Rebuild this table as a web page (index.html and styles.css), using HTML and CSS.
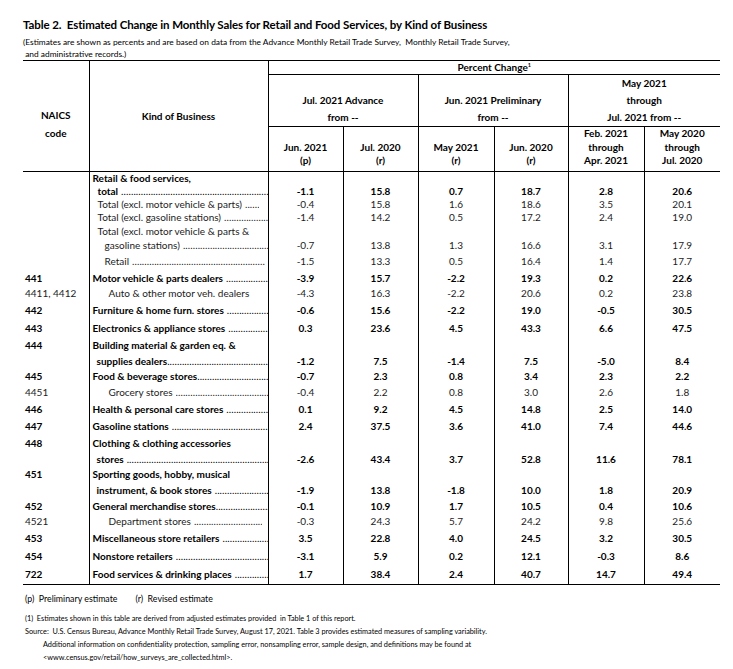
FILE: index.html
```html
<!DOCTYPE html>
<html lang="en">
<head>
<meta charset="utf-8">
<title>Table 2</title>
<link rel="stylesheet" href="styles.css">
</head>
<body>
<div class="page">
  <h1 class="title">Table 2.&nbsp; Estimated Change in Monthly Sales for Retail and Food Services, by Kind of Business</h1>
  <p class="sub">(Estimates are shown as percents and are based on data from the Advance Monthly Retail Trade Survey,&nbsp; Monthly Retail Trade Survey,<br>&nbsp;and administrative records.)</p>
  <table class="t">
    <colgroup>
      <col class="c-code"><col class="c-kind"><col class="c-n"><col class="c-n"><col class="c-n2"><col class="c-n3"><col class="c-n2"><col class="c-n2">
    </colgroup>
    <thead>
      <tr class="hr1">
        <th rowspan="3" class="first naics">NAICS<br>code</th>
        <th rowspan="3" class="kindh">Kind of Business</th>
        <th colspan="6" class="pc">Percent Change<sup>1</sup></th>
      </tr>
      <tr class="hr2">
        <th colspan="2" class="two">Jul. 2021 Advance<br>from --</th>
        <th colspan="2" class="two">Jun. 2021 Preliminary<br>from --</th>
        <th colspan="2">May 2021<br>through<br>Jul. 2021 from --</th>
      </tr>
      <tr class="hr3">
        <th>Jun. 2021<br>(p)</th>
        <th>Jul. 2020<br>(r)</th>
        <th>May 2021<br>(r)</th>
        <th>Jun. 2020<br>(r)</th>
        <th>Feb. 2021<br>through<br>Apr. 2021</th>
        <th>May 2020<br>through<br>Jul. 2020</th>
      </tr>
    </thead>
    <tbody>
      <tr class="b h14"><td class="first code"></td><td class="kc"><div class="lead">Retail &amp; food services,</div></td><td></td><td></td><td></td><td></td><td></td><td></td></tr>
      <tr class="b h12"><td class="first code"></td><td class="kc"><div class="lead i1"><span>total</span><span class="dots"></span></div></td><td>-1.1</td><td>15.8</td><td>0.7</td><td>18.7</td><td>2.8</td><td>20.6</td></tr>
      <tr class="n h13"><td class="first code"></td><td class="kc"><div class="lead i1 e9"><span>Total (excl. motor vehicle &amp; parts)</span><span class="dots"></span></div></td><td>-0.4</td><td>15.8</td><td>1.6</td><td>18.6</td><td>3.5</td><td>20.1</td></tr>
      <tr class="n h14"><td class="first code"></td><td class="kc"><div class="lead i1"><span>Total (excl. gasoline stations)</span><span class="dots"></span></div></td><td>-1.4</td><td>14.2</td><td>0.5</td><td>17.2</td><td>2.4</td><td>19.0</td></tr>
      <tr class="n h13"><td class="first code"></td><td class="kc"><div class="lead i1">Total (excl. motor vehicle &amp; parts &amp;</div></td><td></td><td></td><td></td><td></td><td></td><td></td></tr>
      <tr class="n h15"><td class="first code"></td><td class="kc"><div class="lead i2"><span>gasoline stations)</span><span class="dots"></span></div></td><td>-0.7</td><td>13.8</td><td>1.3</td><td>16.6</td><td>3.1</td><td>17.9</td></tr>
      <tr class="n h18"><td class="first code"></td><td class="kc"><div class="lead i2 e3"><span>Retail</span><span class="dots"></span></div></td><td>-1.5</td><td>13.3</td><td>0.5</td><td>16.4</td><td>1.4</td><td>17.7</td></tr>
      <tr class="b h15"><td class="first code">441</td><td class="kc"><div class="lead"><span>Motor vehicle &amp; parts dealers</span><span class="dots"></span></div></td><td>-3.9</td><td>15.7</td><td>-2.2</td><td>19.3</td><td>0.2</td><td>22.6</td></tr>
      <tr class="n h16"><td class="first code">4411, 4412</td><td class="kc"><div class="lead i3 e18"><span>Auto &amp; other motor veh. dealers</span><span class="dots"></span></div></td><td>-4.3</td><td>16.3</td><td>-2.2</td><td>20.6</td><td>0.2</td><td>23.8</td></tr>
      <tr class="b h18"><td class="first code">442</td><td class="kc"><div class="lead"><span>Furniture &amp; home furn. stores</span><span class="dots"></span></div></td><td>-0.6</td><td>15.6</td><td>-2.2</td><td>19.0</td><td>-0.5</td><td>30.5</td></tr>
      <tr class="b h18"><td class="first code">443</td><td class="kc"><div class="lead"><span>Electronics &amp; appliance stores</span><span class="dots"></span></div></td><td>0.3</td><td>23.6</td><td>4.5</td><td>43.3</td><td>6.6</td><td>47.5</td></tr>
      <tr class="b h16"><td class="first code">444</td><td class="kc"><div class="lead">Building material &amp; garden eq. &amp;</div></td><td></td><td></td><td></td><td></td><td></td><td></td></tr>
      <tr class="b h15"><td class="first code"></td><td class="kc"><div class="lead ic"><span>supplies dealers</span><span class="dots tight"></span></div></td><td>-1.2</td><td>7.5</td><td>-1.4</td><td>7.5</td><td>-5.0</td><td>8.4</td></tr>
      <tr class="b h16"><td class="first code">445</td><td class="kc"><div class="lead"><span>Food &amp; beverage stores</span><span class="dots tight"></span></div></td><td>-0.7</td><td>2.3</td><td>0.8</td><td>3.4</td><td>2.3</td><td>2.2</td></tr>
      <tr class="n h16"><td class="first code">4451</td><td class="kc"><div class="lead i3"><span>Grocery stores</span><span class="dots"></span></div></td><td>-0.4</td><td>2.2</td><td>0.8</td><td>3.0</td><td>2.6</td><td>1.8</td></tr>
      <tr class="b h17"><td class="first code">446</td><td class="kc"><div class="lead"><span>Health &amp; personal care stores</span><span class="dots"></span></div></td><td>0.1</td><td>9.2</td><td>4.5</td><td>14.8</td><td>2.5</td><td>14.0</td></tr>
      <tr class="b h18"><td class="first code">447</td><td class="kc"><div class="lead"><span>Gasoline stations</span><span class="dots"></span></div></td><td>2.4</td><td>37.5</td><td>3.6</td><td>41.0</td><td>7.4</td><td>44.6</td></tr>
      <tr class="b h16"><td class="first code">448</td><td class="kc"><div class="lead">Clothing &amp; clothing accessories</div></td><td></td><td></td><td></td><td></td><td></td><td></td></tr>
      <tr class="b h15"><td class="first code"></td><td class="kc"><div class="lead ic"><span>stores</span><span class="dots"></span></div></td><td>-2.6</td><td>43.4</td><td>3.7</td><td>52.8</td><td>11.6</td><td>78.1</td></tr>
      <tr class="b h16"><td class="first code">451</td><td class="kc"><div class="lead">Sporting goods, hobby, musical</div></td><td></td><td></td><td></td><td></td><td></td><td></td></tr>
      <tr class="b h16"><td class="first code"></td><td class="kc"><div class="lead ic"><span>instrument, &amp; book stores</span><span class="dots"></span></div></td><td>-1.9</td><td>13.8</td><td>-1.8</td><td>10.0</td><td>1.8</td><td>20.9</td></tr>
      <tr class="b h15"><td class="first code">452</td><td class="kc"><div class="lead"><span>General merchandise stores</span><span class="dots tight"></span></div></td><td>-0.1</td><td>10.9</td><td>1.7</td><td>10.5</td><td>0.4</td><td>10.6</td></tr>
      <tr class="n h16"><td class="first code">4521</td><td class="kc"><div class="lead i3 e6"><span>Department stores</span><span class="dots"></span></div></td><td>-0.3</td><td>24.3</td><td>5.7</td><td>24.2</td><td>9.8</td><td>25.6</td></tr>
      <tr class="b h18"><td class="first code">453</td><td class="kc"><div class="lead"><span>Miscellaneous store retailers</span><span class="dots"></span></div></td><td>3.5</td><td>22.8</td><td>4.0</td><td>24.5</td><td>3.2</td><td>30.5</td></tr>
      <tr class="b h18"><td class="first code">454</td><td class="kc"><div class="lead"><span>Nonstore retailers</span><span class="dots"></span></div></td><td>-3.1</td><td>5.9</td><td>0.2</td><td>12.1</td><td>-0.3</td><td>8.6</td></tr>
      <tr class="b h19"><td class="first code">722</td><td class="kc"><div class="lead"><span>Food services &amp; drinking places</span><span class="dots"></span></div></td><td>1.7</td><td>38.4</td><td>2.4</td><td>40.7</td><td>14.7</td><td>49.4</td></tr>
    </tbody>
  </table>
  <p class="legend"><span>(p)&nbsp; Preliminary estimate</span><span class="r">(r)&nbsp; Revised estimate</span></p>
  <div class="notes">
    <p>(1)&nbsp; Estimates shown in this table are derived from adjusted estimates provided&nbsp; in Table 1 of this report.</p>
    <p>Source:&nbsp; U.S. Census Bureau, Advance Monthly Retail Trade Survey, August 17, 2021. Table 3 provides estimated measures of sampling variability.</p>
    <p class="ind">Additional information on confidentiality protection, sampling error, nonsampling error, sample design, and definitions may be found at</p>
    <p class="ind">&lt;www.census.gov/retail/how_surveys_are_collected.html&gt;.</p>
  </div>
</div>
</body>
</html>
```

FILE: styles.css
```css
* { box-sizing: border-box; }
html, body { margin: 0; background: #fff; }
body { font-family: Lato, "Liberation Sans", sans-serif; color: #000; }

.page { padding: 17px 0 0 23px; }

.title { font-size: 11.5px; font-weight: 700; line-height: 16px; margin: 0 0 3px 0; letter-spacing: -0.1px; }
.sub { font-size: 8.4px; line-height: 12px; margin: 0; }

.t {
  border-collapse: collapse;
  table-layout: fixed;
  width: 697px;
  border-top: 1.5px solid #000;
  border-bottom: 1.5px solid #000;
  font-size: 10px;
}
.c-code { width: 66px; }
.c-kind { width: 179px; }
.c-n { width: 75px; }
.c-n2 { width: 76px; }
.c-n3 { width: 74px; }

th, td { border-left: 1px solid #000; padding: 0; }
.t .first { border-left: none; }

th { font-weight: 700; text-align: center; }
.naics { vertical-align: middle; padding-top: 16px; line-height: 18px; border-bottom: 1px solid #000; }
.kindh { vertical-align: middle; border-bottom: 1px solid #000; }
.hr1 .pc { height: 13px; line-height: 13px; border-bottom: 1px solid #000; vertical-align: middle; }
.pc sup { font-size: 5.5px; vertical-align: 4px; line-height: 0; }
.hr2 th { height: 48px; line-height: 17px; vertical-align: top; border-bottom: 1px solid #000; }
.hr2 th.two { padding-top: 17px; }
.hr3 th { height: 42px; line-height: 13.5px; vertical-align: bottom; padding-bottom: 3px; border-bottom: 1px solid #000; }

td { line-height: 12px; vertical-align: middle; text-align: center; white-space: nowrap; color: #000; }
.b td { font-weight: 700; }
.n td { font-weight: 400; color: #1c1c1c; }
td.code { text-align: left; padding-left: 2px; }
td.kc { text-align: left; }

.h12 { height: 12px; }
.h13 { height: 13px; }
.h14 { height: 14px; }
.h15 { height: 15px; }
.h16 { height: 16px; }
.h17 { height: 17px; }
.h18 { height: 18px; }
.h19 { height: 19px; }

.lead { display: flex; padding-left: 3px; overflow: hidden; }
.lead.i1 { padding-left: 8px; }
.lead.i2 { padding-left: 15px; }
.lead.i3 { padding-left: 19px; }
.lead.ic { padding-left: 7px; }
.lead.e3 { padding-right: 3px; }
.lead.e6 { padding-right: 6px; }
.lead.e9 { padding-right: 9px; }
.lead.e18 { padding-right: 18px; }
.dots { flex: 1; overflow: hidden; margin-left: 3px; font-weight: 400; letter-spacing: 0.1px; }
.dots.tight { margin-left: 0; }
.dots::after { content: "................................................................................................................................"; }

.legend { font-size: 8.8px; line-height: 12px; margin: 8px 0 0 2px; }
.legend .r { margin-left: 18px; }
.notes { margin: 7px 0 0 2px; font-size: 7.3px; line-height: 13px; }
.notes p { margin: 0; }
.notes .ind { padding-left: 18px; }
```
